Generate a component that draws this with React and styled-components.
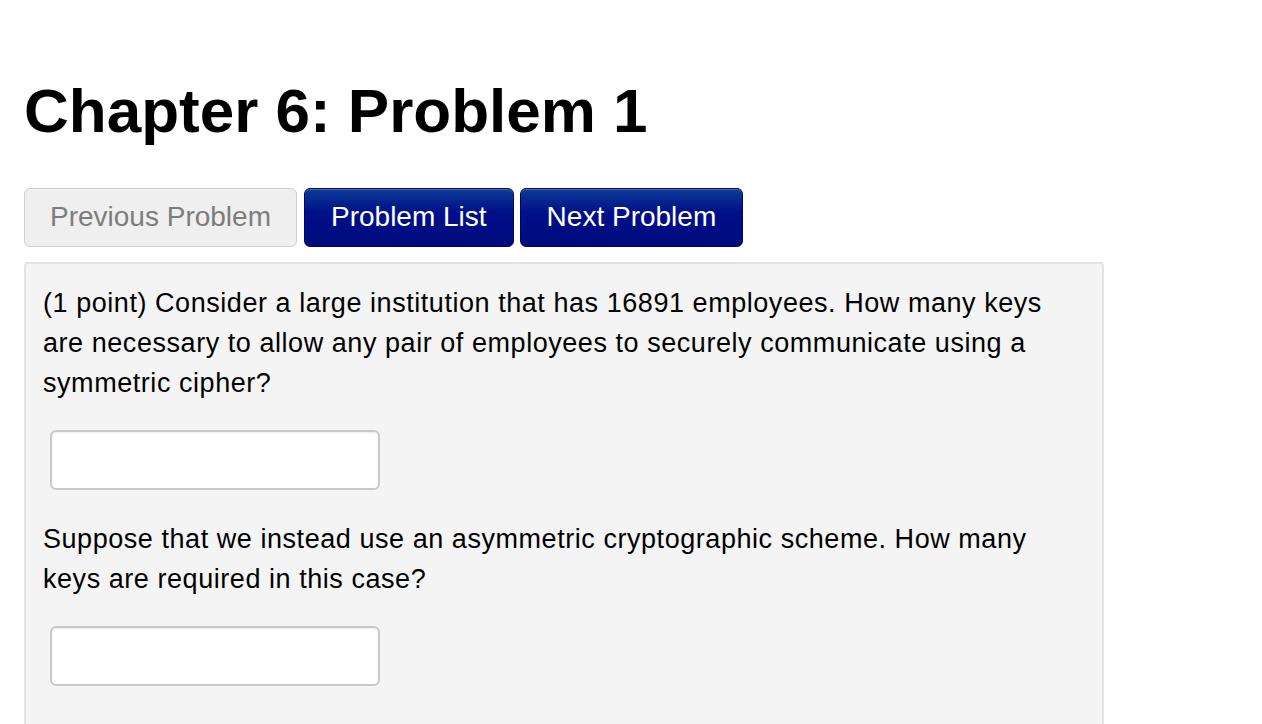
import React from "react";
import styled, { createGlobalStyle } from "styled-components";

const Global = createGlobalStyle`
  html, body { margin: 0; padding: 0; background: #ffffff; }
  body { font-family: "Liberation Sans", Arial, Helvetica, sans-serif; color: #000; }
  * { box-sizing: border-box; }
`;

const Page = styled.div`
  padding: 80px 0 0 24px;
`;

const Title = styled.h1`
  margin: 0;
  font-size: 62px;
  line-height: 62px;
  font-weight: 700;
`;

const Nav = styled.div`
  display: flex;
  margin-top: 46px;
`;

const NavButton = styled.button`
  font-family: inherit;
  font-size: 28px;
  line-height: 32px;
  height: 59px;
  padding: 12px ${(p) => (p.$disabled ? 25 : 26)}px 13px;
  margin-right: ${(p) => p.$gap}px;
  border-radius: 6px;
  cursor: pointer;
  border: 1px solid ${(p) => (p.$disabled ? "#cfcfcf" : "#00065e")};
  color: ${(p) => (p.$disabled ? "#7d7d7d" : "#ffffff")};
  background: ${(p) =>
    p.$disabled ? "#efefef" : "linear-gradient(to bottom, #0b3d94 0%, #00108a 40%, #000a7c 100%)"};
  box-shadow: ${(p) => (p.$disabled ? "none" : "inset 0 1px 0 rgba(255,255,255,0.25)")};
`;

const Panel = styled.div`
  margin-top: 15px;
  width: 1080px;
  background: #f4f4f4;
  border: 2px solid #e3e3e3;
  border-radius: 4px;
  padding: 19px 40px 60px 17px;
`;

const Text = styled.p`
  margin: 0;
  font-size: 27px;
  line-height: 40px;
  letter-spacing: 0.55px;
`;

const AnswerRow = styled.div`
  padding: 27px 0 29px 7px;
`;

const Answer = styled.input`
  display: block;
  width: 330px;
  height: 60px;
  border: 2px solid #c9c9c9;
  border-radius: 6px;
  background: #fff;
  box-shadow: inset 0 1px 2px rgba(0, 0, 0, 0.08);
  font-family: inherit;
  font-size: 24px;
  padding: 0 10px;
  outline: none;
`;

export default function App() {
  return (
    <>
      <Global />
      <Page>
        <Title>Chapter 6: Problem 1</Title>
        <Nav>
          <NavButton $disabled $gap={7}>Previous Problem</NavButton>
          <NavButton $gap={6}>Problem List</NavButton>
          <NavButton $gap={0}>Next Problem</NavButton>
        </Nav>
        <Panel>
          <Text>
            (1 point) Consider a large institution that has 16891 employees. How many keys are
            necessary to allow any pair of employees to securely communicate using a symmetric
            cipher?
          </Text>
          <AnswerRow>
            <Answer type="text" />
          </AnswerRow>
          <Text>
            Suppose that we instead use an asymmetric cryptographic scheme. How many keys are
            required in this case?
          </Text>
          <AnswerRow>
            <Answer type="text" />
          </AnswerRow>
        </Panel>
      </Page>
    </>
  );
}
